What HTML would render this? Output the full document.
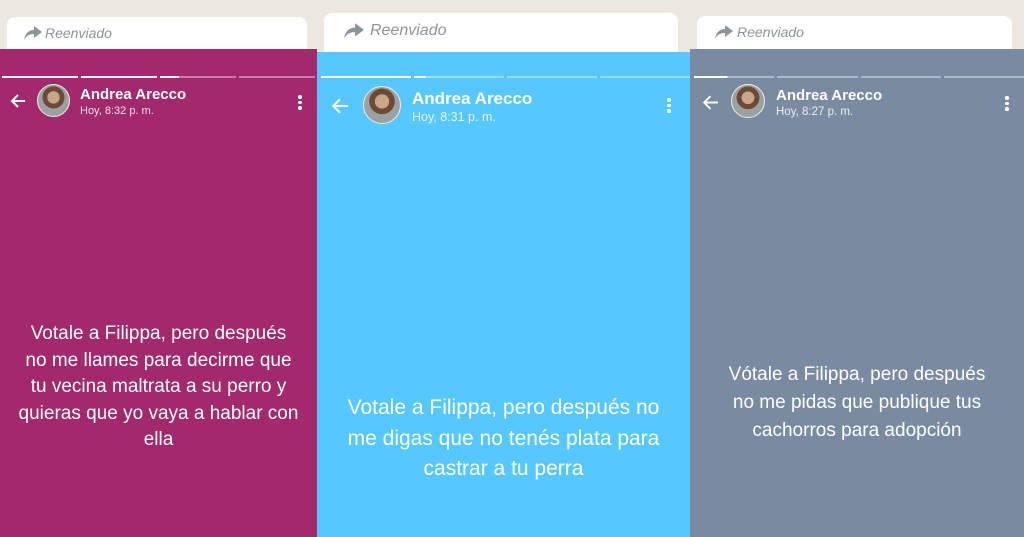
<!DOCTYPE html>
<html><head><meta charset="utf-8"><style>
*{margin:0;padding:0;box-sizing:border-box}
body{width:1024px;height:537px;overflow:hidden;background:#ece7df;position:relative;font-family:"Liberation Sans",Roboto,sans-serif}
.bub{position:absolute;background:#fff;border-radius:8px;color:#8a949b;font-style:italic;font-size:14px}
.bub span{position:absolute;top:50%;transform:translateY(-50%)}
.bub svg{position:absolute;top:50%;transform:translateY(-50%)}
.p{position:absolute;color:#fff}
.bars{position:absolute;left:2px;right:2px;display:flex;gap:3px}
.bars div{flex:1;height:2px;background:rgba(255,255,255,.4);position:relative}
.bars div.f{background:rgba(255,255,255,.95)}
.av{position:absolute;border-radius:50%;border:1.5px solid #eee;background:radial-gradient(circle at 50% 40%,#c9a58a 0 25%,#6b4a36 26% 45%,#9aa1a0 46%)}
.nm{position:absolute;font-weight:bold}
.tm{position:absolute;opacity:.85}
.back{position:absolute}
.dots{position:absolute;width:4px}
.dots i{display:block;width:3.5px;height:3.5px;background:#fff;border-radius:50%;margin-bottom:2px}
.tx{position:absolute;left:0;right:0;text-align:center}
</style></head><body>
<div class="bub" style="left:7px;top:17px;width:300px;height:40px"><svg style="left:17px;margin-top:-4px" width="18" height="14" viewBox="0 0 18 14"><path d="M10 0 L18 6 L10 12 V8 C5 8 2 10 0 14 C1 8 4 4 10 4Z" fill="#8a959c"/></svg><span style="left:38px;margin-top:-4px">Reenviado</span></div>
<div class="bub" style="left:324px;top:13px;width:354px;height:45px"><svg style="left:20px;margin-top:-5px" width="20" height="16" viewBox="0 0 18 14"><path d="M10 0 L18 6 L10 12 V8 C5 8 2 10 0 14 C1 8 4 4 10 4Z" fill="#8a959c"/></svg><span style="left:46px;margin-top:-5px;font-size:16px">Reenviado</span></div>
<div class="bub" style="left:697px;top:16px;width:315px;height:40px"><svg style="left:18px;margin-top:-4px" width="18" height="14" viewBox="0 0 18 14"><path d="M10 0 L18 6 L10 12 V8 C5 8 2 10 0 14 C1 8 4 4 10 4Z" fill="#8a959c"/></svg><span style="left:40px;margin-top:-4px">Reenviado</span></div>

<div class="p" style="left:0;top:49px;width:317px;height:488px;background:#a2296b">
<div class="bars" style="top:27px"><div class="f"></div><div class="f"></div><div style="background:linear-gradient(90deg,#fff 0 25%,rgba(255,255,255,.4) 25%)"></div><div></div></div>
<svg class="back" style="left:10px;top:44px" width="16" height="16" viewBox="0 0 16 16"><path d="M15 8H2M8 2L2 8L8 14" stroke="#fff" stroke-width="2" fill="none"/></svg>
<div class="av" style="left:37px;top:35px;width:33px;height:33px"></div>
<div class="nm" style="left:80px;top:37px;font-size:15px">Andrea Arecco</div>
<div class="tm" style="left:80px;top:56px;font-size:11px">Hoy, 8:32 p. m.</div>
<div class="dots" style="left:298px;top:46px"><i></i><i></i><i></i></div>
<div class="tx" style="top:272px;font-size:19px;line-height:26.5px;padding:0 12px">Votale a Filippa, pero después<br>no me llames para decirme que<br>tu vecina maltrata a su perro y<br>quieras que yo vaya a hablar con<br>ella</div>
</div>

<div class="p" style="left:317px;top:52px;width:373px;height:485px;background:#56c8fd">
<div class="bars" style="top:24px;left:4px;right:0"><div class="f"></div><div style="background:linear-gradient(90deg,#fff 0 13%,rgba(255,255,255,.4) 13%)"></div><div></div><div></div></div>
<svg class="back" style="left:14px;top:45px" width="18" height="18" viewBox="0 0 16 16"><path d="M15 8H2M8 2L2 8L8 14" stroke="#fff" stroke-width="1.8" fill="none"/></svg>
<div class="av" style="left:46px;top:34px;width:38px;height:38px"></div>
<div class="nm" style="left:95px;top:37px;font-size:17px">Andrea Arecco</div>
<div class="tm" style="left:95px;top:58px;font-size:12.5px">Hoy, 8:31 p. m.</div>
<div class="dots" style="left:350px;top:46px"><i></i><i></i><i></i></div>
<div class="tx" style="top:341px;font-size:21px;line-height:30.5px;padding:0 12px">Votale a Filippa, pero después no<br>me digas que no tenés plata para<br>castrar a tu perra</div>
</div>

<div class="p" style="left:690px;top:49px;width:334px;height:488px;background:#7a8ba1">
<div class="bars" style="top:27px;left:4px;right:0"><div style="background:linear-gradient(90deg,#fff 0 42%,rgba(255,255,255,.4) 42%)"></div><div></div><div></div><div></div></div>
<svg class="back" style="left:12px;top:45px" width="17" height="17" viewBox="0 0 16 16"><path d="M15 8H2M8 2L2 8L8 14" stroke="#fff" stroke-width="1.8" fill="none"/></svg>
<div class="av" style="left:41px;top:35px;width:34px;height:34px"></div>
<div class="nm" style="left:86px;top:38px;font-size:15px">Andrea Arecco</div>
<div class="tm" style="left:86px;top:57px;font-size:11.5px">Hoy, 8:27 p. m.</div>
<div class="dots" style="left:315px;top:47px"><i></i><i></i><i></i></div>
<div class="tx" style="top:312px;font-size:19px;line-height:28px;padding:0 12px">Vótale a Filippa, pero después<br>no me pidas que publique tus<br>cachorros para adopción</div>
</div>
</body></html>
